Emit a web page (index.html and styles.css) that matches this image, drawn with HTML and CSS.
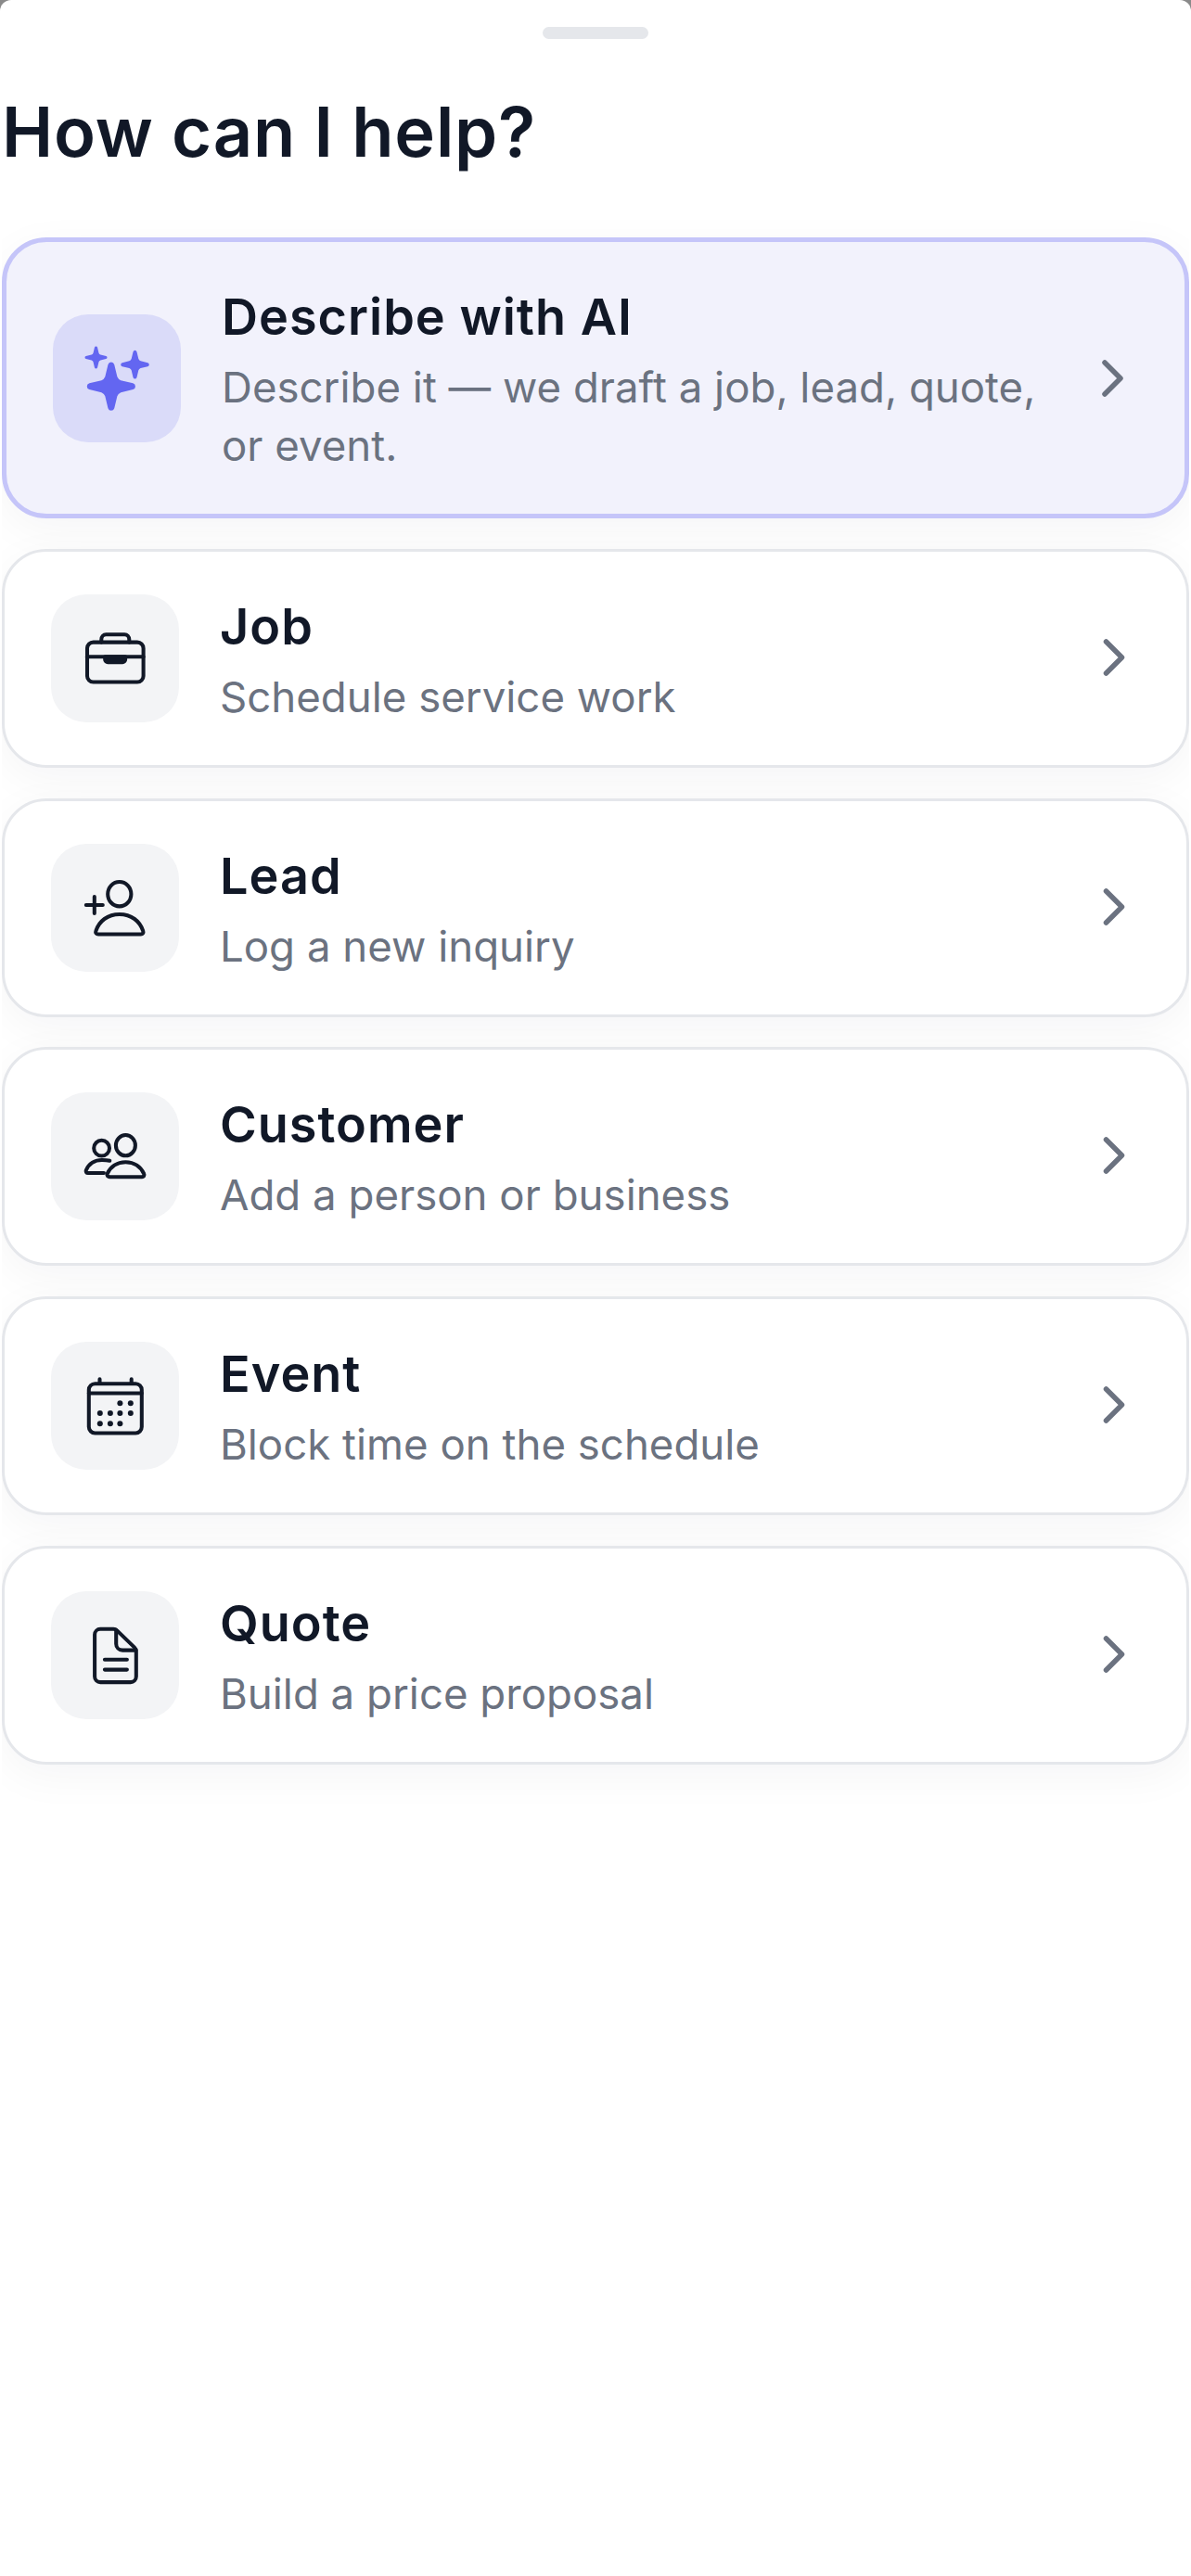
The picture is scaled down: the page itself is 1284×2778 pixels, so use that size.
FILE: index.html
```html
<!DOCTYPE html>
<html lang="en">
<head>
<meta charset="utf-8">
<title>How can I help?</title>
<link rel="stylesheet" href="styles.css">
</head>
<body>
<main class="sheet">
  <div class="grabber"></div>
  <h1 class="heading">How can I help?</h1>
  <div class="list">
    <a class="card card-ai">
      <span class="icon-box icon-box-ai">
        <svg class="icon" viewBox="0 0 24 24" fill="#6366f1">
          <path transform="translate(9.95 14.9) scale(8.7)" d="M0-1Q.1-1 .13-.9L.25-.4Q.3-.28 .4-.25L.9-.13Q1-.1 1 0Q1 .1 .9 .13L.4 .25Q.28 .3 .25 .4L.13 .9Q.1 1 0 1Q-.1 1-.13 .9L-.25 .4Q-.28 .3-.4 .25L-.9 .13Q-1 .1-1 0Q-1-.1-.9-.13L-.4-.25Q-.3-.28-.25-.4L-.13-.9Q-.1-1 0-1Z"/>
          <path transform="translate(4.5 4.5) scale(4)" d="M0-1Q.1-1 .13-.9L.25-.4Q.3-.28 .4-.25L.9-.13Q1-.1 1 0Q1 .1 .9 .13L.4 .25Q.28 .3 .25 .4L.13 .9Q.1 1 0 1Q-.1 1-.13 .9L-.25 .4Q-.28 .3-.4 .25L-.9 .13Q-1 .1-1 0Q-1-.1-.9-.13L-.4-.25Q-.3-.28-.25-.4L-.13-.9Q-.1-1 0-1Z"/>
          <path transform="translate(18.5 7.05) scale(5.1)" d="M0-1Q.1-1 .13-.9L.25-.4Q.3-.28 .4-.25L.9-.13Q1-.1 1 0Q1 .1 .9 .13L.4 .25Q.28 .3 .25 .4L.13 .9Q.1 1 0 1Q-.1 1-.13 .9L-.25 .4Q-.28 .3-.4 .25L-.9 .13Q-1 .1-1 0Q-1-.1-.9-.13L-.4-.25Q-.3-.28-.25-.4L-.13-.9Q-.1-1 0-1Z"/>
        </svg>
      </span>
      <span class="text">
        <span class="title">Describe with AI</span>
        <span class="sub">Describe it — we draft a job, lead, quote, or event.</span>
      </span>
      <svg class="chevron" viewBox="0 0 60 60"><path d="M24 13 41 30 24 47"/></svg>
    </a>
    <a class="card">
      <span class="icon-box">
        <svg class="icon icon-line" viewBox="0 0 24 24">
          <rect x="2" y="6.2" width="20.2" height="14.3" rx="2.2"/>
          <path d="M7.1 6.2V5.2C7.1 4.2 7.8 3.4 8.8 3.4H15.4C16.4 3.4 17.1 4.2 17.1 5.2V6.2"/>
          <path d="M2 11.4H22.2"/>
          <path class="solid" d="M8.4 11.4H15.7V12.4C15.7 13 15.2 13.4 14.7 13.4H9.4C8.9 13.4 8.4 13 8.4 12.4Z"/>
        </svg>
      </span>
      <span class="text">
        <span class="title">Job</span>
        <span class="sub">Schedule service work</span>
      </span>
      <svg class="chevron" viewBox="0 0 60 60"><path d="M23.5 12 40.5 29 23.5 46"/></svg>
    </a>
    <a class="card">
      <span class="icon-box">
        <svg class="icon icon-line" viewBox="0 0 24 24">
          <ellipse cx="13.6" cy="7.05" rx="4.2" ry="4.4"/>
          <path d="M6 21.5H21.3C21.9 21.5 22.3 21 22.1 20.4 21 16.8 17.8 14.3 13.6 14.3S6.2 16.8 5.1 20.4C4.9 21 5.3 21.5 6 21.5Z"/>
          <path d="M1.6 11H7.6M4.6 8V14"/>
        </svg>
      </span>
      <span class="text">
        <span class="title">Lead</span>
        <span class="sub">Log a new inquiry</span>
      </span>
      <svg class="chevron" viewBox="0 0 60 60"><path d="M23.5 12 40.5 29 23.5 46"/></svg>
    </a>
    <a class="card">
      <span class="icon-box">
        <svg class="icon icon-line" viewBox="0 0 24 24">
          <ellipse cx="15.8" cy="8.05" rx="3.5" ry="3.7"/>
          <circle cx="7.2" cy="9.05" r="2.8"/>
          <path d="M10.2 19.4H21.6C22.3 19.4 22.7 18.9 22.4 18.3 21.3 15.8 18.9 14.05 15.8 14.05S10.3 15.8 9.2 18.3C8.9 18.9 9.4 19.4 10.2 19.4Z"/>
          <path d="M10.1 13.6C9.4 13.4 8.4 13.3 7.3 13.3 4.8 13.3 2.6 14.6 1.6 17 1.4 17.5 1.7 18 2.3 18H8"/>
        </svg>
      </span>
      <span class="text">
        <span class="title">Customer</span>
        <span class="sub">Add a person or business</span>
      </span>
      <svg class="chevron" viewBox="0 0 60 60"><path d="M23.5 12 40.5 29 23.5 46"/></svg>
    </a>
    <a class="card">
      <span class="icon-box">
        <svg class="icon icon-line" viewBox="0 0 24 24">
          <rect x="2.6" y="4.05" width="19" height="17.75" rx="2.2"/>
          <path d="M2.6 7.5H21.6M6.5 2.4V4M17.9 2.4V4"/>
          <g class="dots">
            <circle cx="13.8" cy="11.05" r="1"/><circle cx="17.6" cy="11.05" r="1"/>
            <circle cx="6.6" cy="14.7" r="1"/><circle cx="10.3" cy="14.7" r="1"/><circle cx="13.8" cy="14.7" r="1"/><circle cx="17.6" cy="14.7" r="1"/>
            <circle cx="6.6" cy="18.4" r="1"/><circle cx="10.3" cy="18.4" r="1"/><circle cx="13.8" cy="18.4" r="1"/>
          </g>
        </svg>
      </span>
      <span class="text">
        <span class="title">Event</span>
        <span class="sub">Block time on the schedule</span>
      </span>
      <svg class="chevron" viewBox="0 0 60 60"><path d="M23.5 12 40.5 29 23.5 46"/></svg>
    </a>
    <a class="card">
      <span class="icon-box">
        <svg class="icon icon-line" viewBox="0 0 24 24">
          <path d="M6.7 2.6H11.4C11.9 2.6 12.4 2.8 12.8 3.2L19 9.2C19.4 9.6 19.6 10.1 19.6 10.6V19.7C19.6 20.8 18.7 21.7 17.6 21.7H6.7C5.6 21.7 4.7 20.8 4.7 19.7V4.6C4.7 3.5 5.6 2.6 6.7 2.6Z"/>
          <path d="M12.4 3V7.9C12.4 9.2 13.4 10.2 14.7 10.2H19.5"/>
          <path d="M8.3 13.6H16.3M8.3 17.2H16.3"/>
        </svg>
      </span>
      <span class="text">
        <span class="title">Quote</span>
        <span class="sub">Build a price proposal</span>
      </span>
      <svg class="chevron" viewBox="0 0 60 60"><path d="M23.5 12 40.5 29 23.5 46"/></svg>
    </a>
  </div>
</main>
</body>
</html>
```

FILE: styles.css
```css
* { box-sizing: border-box; }
html, body { margin: 0; padding: 0; background: #8a8a8a; }
.sheet {
  height: 2778px;
  background: #ffffff;
  border-top-left-radius: 12px;
  border-top-right-radius: 12px;
  padding: 29px 2px 0;
  overflow: hidden;
  font-family: Inter, "Liberation Sans", sans-serif;
}
.grabber {
  width: 114px;
  height: 13px;
  border-radius: 7px;
  background: #e5e7eb;
  margin: 0 auto;
}
.heading {
  margin: 50px 0 0 0;
  height: 100px;
  font-size: 74px;
  line-height: 100px;
  font-weight: 600;
  letter-spacing: 0.8px;
  color: #111827;
}
.list {
  display: flex;
  flex-direction: column;
  gap: 32.75px;
  overflow: hidden;
  padding-top: 64px;
  padding-bottom: 120px;
}
.card {
  display: flex;
  align-items: center;
  gap: 44px;
  padding: 42px 50px;
  border: 3px solid #e5e7eb;
  border-radius: 48px;
  background: #ffffff;
  box-shadow: 0 12px 48px rgba(17, 24, 39, 0.045);
}
.card-ai {
  border: 5px solid #c5c5f9;
  background: #f2f2fc;
}
.icon-box {
  flex: none;
  width: 138px;
  height: 138px;
  border-radius: 38px;
  background: #f3f4f6;
  display: flex;
  align-items: center;
  justify-content: center;
}
.icon-box-ai { background: #dadbf9; }
.icon { width: 72px; height: 72px; display: block; }
.icon-line {
  fill: none;
  stroke: #111827;
  stroke-width: 1.35;
  stroke-linecap: round;
  stroke-linejoin: round;
}
.icon-line .solid { fill: #111827; }
.icon-line .dots { fill: #111827; stroke: none; }
.text {
  flex: 1;
  min-width: 0;
  display: flex;
  flex-direction: column;
  padding-top: 8px;
}
.title {
  font-size: 54px;
  line-height: 62px;
  font-weight: 600;
  letter-spacing: 1px;
  color: #111827;
  margin-bottom: 13px;
}
.sub {
  font-size: 45.6px;
  line-height: 63px;
  font-weight: 400;
  color: #6b7280;
}
.chevron {
  flex: none;
  width: 60px;
  height: 60px;
  fill: none;
  stroke: #6b7280;
  stroke-width: 5.5;
  stroke-linecap: round;
  stroke-linejoin: round;
}
```
